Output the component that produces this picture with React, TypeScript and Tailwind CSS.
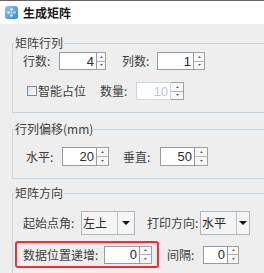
import React from "react";

const cjk = "font-['Noto_Sans_CJK_SC',sans-serif]";

function Arrow({ up }: { up: boolean }) {
  return (
    <svg width="3" height="2" viewBox="0 0 3 2">
      <path d={up ? "M0 2L1.5 0L3 2Z" : "M0 0L1.5 2L3 0Z"} fill="#666" />
    </svg>
  );
}

function Spin({
  value,
  field,
  spin,
  h,
  disabled,
}: {
  value: string;
  field: string;
  spin: string;
  h: string;
  disabled?: boolean;
}) {
  return (
    <div className={`flex ${h}`}>
      <div
        className={`${field} h-full bg-white border ${
          disabled ? "border-[#c6d8ea] text-[#b9c8d8]" : "border-[#8e9dad] text-[#2a2a2a]"
        } flex items-center justify-end pr-[2px] font-['Liberation_Sans',sans-serif] text-[13px] leading-none`}
      >
        {value}
      </div>
      <div className={`${spin} h-full flex flex-col border border-l-0 border-[#a0a0a0]`}>
        <div className="flex-1 flex items-center justify-center bg-[#f7f7f7] border-b border-[#b4b4b4]">
          <Arrow up />
        </div>
        <div className="flex-1 flex items-center justify-center bg-[#f7f7f7]">
          <Arrow up={false} />
        </div>
      </div>
    </div>
  );
}

function Combo({ text, w, aw }: { text: string; w: string; aw: string }) {
  return (
    <div className={`${w} h-[24px] flex border border-[#a9b8c8] bg-[#f4f4f4]`}>
      <div className={`flex-1 flex items-center pl-[1px] text-[12px] leading-none text-[#2a2a2a] ${cjk}`}>{text}</div>
      <div className={`${aw} h-full flex items-center justify-center border-l border-[#b8c4d0]`}>
        <svg width="8" height="4" viewBox="0 0 8 4">
          <path d="M0 0H8L4 4Z" fill="#111" />
        </svg>
      </div>
    </div>
  );
}

function Label({ text, w, extra }: { text: string; w: string; extra?: string }) {
  return (
    <div className={`${w} ${extra ?? ""} shrink-0 text-[12px] leading-none text-[#404040] ${cjk} whitespace-nowrap`}>
      {text}
    </div>
  );
}

export default function App() {
  return (
    <div className="w-[264px] h-[273px] overflow-hidden bg-[#eeeeee] flex flex-col">
      <div className="h-[24px] shrink-0 bg-white border-t border-[#666] flex items-center">
        <svg width="13" height="13" viewBox="0 0 13 13" className="ml-[5px]">
          <defs>
            <linearGradient id="g" x1="0" y1="0" x2="1" y2="1">
              <stop offset="0" stopColor="#8cc8f8" />
              <stop offset="1" stopColor="#2f86de" />
            </linearGradient>
          </defs>
          <rect x="0" y="0" width="13" height="13" rx="2.5" fill="url(#g)" />
          <circle cx="6.5" cy="3.5" r="1.3" fill="#e8f6ff" />
          <circle cx="3.5" cy="6.5" r="1.3" fill="#e8f6ff" />
          <circle cx="9.5" cy="6.5" r="1.3" fill="#ffd24a" />
          <circle cx="6.5" cy="9.5" r="1.3" fill="#e8f6ff" />
          <circle cx="6.5" cy="6.5" r="1.1" fill="#bfe4ff" />
        </svg>
        <div className={`ml-[5px] text-[12px] leading-none font-semibold text-[#1a1a1a] ${cjk}`}>生成矩阵</div>
      </div>

      <div className="flex flex-col pl-[12px] pt-[12px]">
        <fieldset className="w-[260px] border border-[#c7d3df] pt-[2px] pb-[12px]">
          <legend className={`ml-[1px] px-[1px] text-[12px] leading-[14px] text-[#404040] ${cjk}`}>矩阵行列</legend>
          <div className="pl-[10px] flex flex-col">
            <div className="flex items-center h-[18px]">
              <Label text="行数:" w="w-[36px]" />
              <Spin value="4" field="w-[38px]" spin="w-[9px]" h="h-[18px]" />
              <Label text="列数:" w="w-[35px]" extra="ml-[16px]" />
              <Spin value="1" field="w-[37px]" spin="w-[11px]" h="h-[18px]" />
            </div>
            <div className="flex items-center h-[18px] mt-[12px]">
              <div className="ml-[4px] w-[10px] h-[10px] border border-[#7d8c9c] bg-linear-to-br from-[#d5dfe9] to-white" />
              <Label text="智能占位" w="w-[48px]" extra="ml-[1px]" />
              <Label text="数量:" w="w-[36px]" extra="ml-[14px]" />
              <Spin value="10" field="w-[35px]" spin="w-[13px]" h="h-[18px]" disabled />
            </div>
          </div>
        </fieldset>

        <fieldset className="mt-[9px] w-[260px] border border-[#c7d3df] pt-[11px] pb-[12px]">
          <legend className={`ml-[1px] px-[1px] text-[12px] leading-[14px] text-[#404040] ${cjk}`}>行列偏移(mm)</legend>
          <div className="pl-[10px] flex items-center h-[19px]">
            <Label text="水平:" w="w-[36px]" extra="ml-[3px]" />
            <Spin value="20" field="w-[35px]" spin="w-[12px]" h="h-[19px]" />
            <Label text="垂直:" w="w-[37px]" extra="ml-[14px]" />
            <Spin value="50" field="w-[35px]" spin="w-[13px]" h="h-[19px]" />
          </div>
        </fieldset>

        <fieldset className="mt-[7px] w-[260px] h-[120px] border border-[#c7d3df] pt-[11px]">
          <legend className={`ml-[1px] px-[1px] text-[12px] leading-[14px] text-[#404040] ${cjk}`}>矩阵方向</legend>
          <div className="flex flex-col">
            <div className="pl-[10px] flex items-center h-[24px]">
              <Label text="起始点角:" w="w-[58px]" />
              <Combo text="左上" w="w-[54px]" aw="w-[17px]" />
              <Label text="打印方向:" w="w-[53px]" extra="ml-[12px]" />
              <Combo text="水平" w="w-[50px]" aw="w-[13px]" />
            </div>
            <div className="mt-[6px] flex items-center">
              <div className="ml-[2px] w-[144px] h-[27px] border-2 border-[#ff2a2a] rounded-[3px] flex items-center pl-[6px]">
                <Label text="数据位置递增:" w="w-[81px]" />
                <Spin value="0" field="w-[36px]" spin="w-[12px]" h="h-[18px]" />
              </div>
              <Label text="间隔:" w="w-[36px]" extra="ml-[8px]" />
              <Spin value="0" field="w-[25px]" spin="w-[11px]" h="h-[18px]" />
            </div>
          </div>
        </fieldset>
      </div>
    </div>
  );
}
